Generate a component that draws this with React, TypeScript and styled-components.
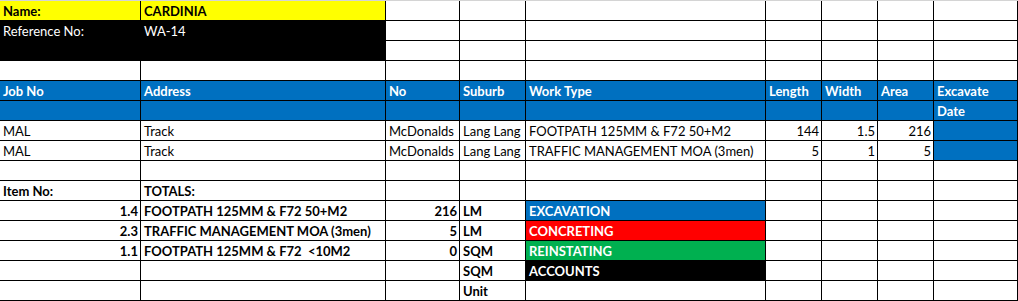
import styled, { createGlobalStyle } from "styled-components";

const GlobalStyles = createGlobalStyle`
  body {
    margin: 0;
    background-color: #ffffff;
    font-family: Lato, "Liberation Sans", Arial, sans-serif;
  }
`;

const BLUE = "#0070c0";
const RED = "#ff0000";
const GREEN = "#00b050";
const YELLOW = "#ffff00";
const BLACK = "#000000";

// column widths incl. the 1px right border
const COLS = [141, 245, 74, 66, 240, 56, 56, 56, 84];

const Sheet = styled.div`
  display: grid;
  grid-template-columns: ${COLS.map((w) => `${w}px`).join(" ")};
  grid-auto-rows: 20px;
  width: 1018px;
  border-top: 1px solid #d4d4d4;
`;

const Cell = styled.div<{ $bg?: string; $fg?: string; $bold?: boolean; $right?: boolean }>`
  box-sizing: border-box;
  display: flex;
  align-items: flex-end;
  justify-content: ${(p) => (p.$right ? "flex-end" : "flex-start")};
  padding: 0 2px 0 3px;
  border-right: 1px solid #000;
  border-bottom: 1px solid #000;
  background-color: ${(p) => p.$bg || "#ffffff"};
  color: ${(p) => p.$fg || "#000000"};
  font-size: 13px;
  line-height: 17px;
  font-weight: ${(p) => (p.$bold ? 700 : 400)};
  white-space: nowrap;
  overflow: hidden;
`;

type C = { t?: string; bg?: string; fg?: string; b?: boolean; r?: boolean };

const empty = (n: number): C[] => Array.from({ length: n }, () => ({}));
const hdr = (t?: string): C => ({ t, bg: BLUE, fg: "#fff", b: true });
const tot = (t: string, r = false): C => ({ t, b: true, r });
const status = (t: string, bg: string): C => ({ t, bg, fg: "#fff", b: true });

const rows: C[][] = [
  [
    { t: "Name:", bg: YELLOW, b: true },
    { t: "CARDINIA", bg: YELLOW, b: true },
    ...empty(7),
  ],
  [
    { t: "Reference No:", bg: BLACK, fg: "#fff" },
    { t: "WA-14", bg: BLACK, fg: "#fff" },
    ...empty(7),
  ],
  [{ bg: BLACK }, { bg: BLACK }, ...empty(7)],
  empty(9),
  [
    hdr("Job No"),
    hdr("Address"),
    hdr("No"),
    hdr("Suburb"),
    hdr("Work Type"),
    hdr("Length"),
    hdr("Width"),
    hdr("Area"),
    hdr("Excavate"),
  ],
  [hdr(), hdr(), hdr(), hdr(), hdr(), hdr(), hdr(), hdr(), hdr("Date")],
  [
    { t: "MAL" },
    { t: "Track" },
    { t: "McDonalds" },
    { t: "Lang Lang" },
    { t: "FOOTPATH 125MM & F72 50+M2" },
    { t: "144", r: true },
    { t: "1.5", r: true },
    { t: "216", r: true },
    { bg: BLUE },
  ],
  [
    { t: "MAL" },
    { t: "Track" },
    { t: "McDonalds" },
    { t: "Lang Lang" },
    { t: "TRAFFIC MANAGEMENT MOA (3men)" },
    { t: "5", r: true },
    { t: "1", r: true },
    { t: "5", r: true },
    { bg: BLUE },
  ],
  empty(9),
  [tot("Item No:"), tot("TOTALS:"), ...empty(7)],
  [
    tot("1.4", true),
    tot("FOOTPATH 125MM & F72 50+M2"),
    tot("216", true),
    tot("LM"),
    status("EXCAVATION", BLUE),
    ...empty(4),
  ],
  [
    tot("2.3", true),
    tot("TRAFFIC MANAGEMENT MOA (3men)"),
    tot("5", true),
    tot("LM"),
    status("CONCRETING", RED),
    ...empty(4),
  ],
  [
    tot("1.1", true),
    tot("FOOTPATH 125MM & F72\u00a0 <10M2"),
    tot("0", true),
    tot("SQM"),
    status("REINSTATING", GREEN),
    ...empty(4),
  ],
  [{}, {}, {}, tot("SQM"), status("ACCOUNTS", BLACK), ...empty(4)],
  [{}, {}, {}, tot("Unit"), ...empty(5)],
];

function App() {
  return (
    <>
      <GlobalStyles />
      <Sheet>
        {rows.map((row, ri) =>
          row.map((c, ci) => (
            <Cell key={`${ri}-${ci}`} $bg={c.bg} $fg={c.fg} $bold={c.b} $right={c.r}>
              {c.t}
            </Cell>
          ))
        )}
      </Sheet>
    </>
  );
}

export default App;
